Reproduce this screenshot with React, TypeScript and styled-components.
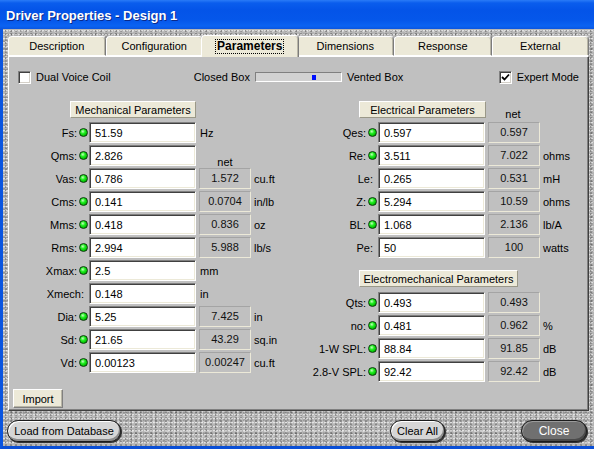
import React from "react";
import styled, { createGlobalStyle } from "styled-components";

const GlobalStyle = createGlobalStyle`
  html, body {
    margin: 0;
    padding: 0;
  }
  body {
    font-family: "Liberation Sans", Arial, sans-serif;
    font-size: 11px;
    color: #000;
  }
`;

const Window = styled.div`
  width: 594px;
  height: 449px;
  display: flex;
  flex-direction: column;
  overflow: hidden;
`;

const TitleBar = styled.div`
  height: 29px;
  flex: none;
  display: flex;
  align-items: center;
  padding: 2px 0 0 6px;
  box-sizing: border-box;
  background: linear-gradient(
    #2a7bf7 0,
    #0a5ded 3px,
    #0454e8 10px,
    #0557ea 20px,
    #0b63f2 26px,
    #0a55e0 29px
  );
  color: #fff;
  font-size: 13px;
  font-weight: bold;
  text-shadow: 1px 1px #0a2a8a;
`;

const Frame = styled.div`
  flex: 1;
  display: flex;
  flex-direction: column;
  min-height: 0;
  border-left: 3px solid #0a55e0;
  border-bottom: 3px solid #0a4fd6;
  background-color: #b5b5b5;
  background-image: radial-gradient(circle at 30% 40%, rgba(255, 255, 255, 0.6) 0.6px, transparent 1.2px),
    radial-gradient(circle at 60% 70%, rgba(0, 0, 0, 0.28) 0.6px, transparent 1.3px),
    radial-gradient(circle at 50% 50%, rgba(255, 255, 255, 0.4) 0.7px, transparent 1.4px),
    radial-gradient(circle at 20% 80%, rgba(0, 0, 0, 0.18) 0.8px, transparent 1.5px);
  background-size: 3px 4px, 5px 3px, 7px 5px, 4px 7px;
`;

const Body = styled.div`
  flex: 1;
  display: flex;
  flex-direction: column;
  min-height: 0;
  padding: 6px 5px 0 5px;
`;

const TabStrip = styled.div`
  height: 21px;
  flex: none;
  display: flex;
  align-items: flex-end;
`;

const Tab = styled.div<{ $active?: boolean }>`
  flex: 1;
  height: ${(p) => (p.$active ? 22 : 20)}px;
  margin: ${(p) => (p.$active ? "0 -2px -1px -2px" : "0")};
  position: relative;
  z-index: ${(p) => (p.$active ? 1 : 0)};
  box-sizing: border-box;
  display: flex;
  align-items: center;
  justify-content: center;
  background: #ece9d8;
  border: 1px solid #fff;
  border-right-color: #7c7c7c;
  border-bottom: ${(p) => (p.$active ? "none" : "1px solid #fff")};
  border-radius: 4px 4px 0 0;
  box-shadow: inset -1px 0 #b8b5a6;
  font-size: ${(p) => (p.$active ? 12 : 11)}px;
  font-weight: ${(p) => (p.$active ? "bold" : "normal")};
`;

const Focus = styled.span`
  border: 1px dotted #000;
  padding: 0 1px;
  line-height: 13px;
`;

const Panel = styled.div`
  flex: 1;
  min-height: 0;
  display: flex;
  flex-direction: column;
  background: #c0c0c0;
  border: 1px solid;
  border-color: #fff #404040 #404040 #fff;
  box-shadow: inset -1px -1px #808080;
`;

const TopRow = styled.div`
  display: grid;
  grid-template-columns: 1fr auto 1fr;
  align-items: center;
  height: 14px;
  margin: 13px 9px 0 9px;
`;

const CheckLabel = styled.div<{ $end?: boolean }>`
  display: flex;
  align-items: center;
  gap: 5px;
  justify-self: ${(p) => (p.$end ? "end" : "start")};
`;

const Box = styled.div`
  width: 13px;
  height: 13px;
  box-sizing: border-box;
  background: #fff;
  border: 1px solid;
  border-color: #808080 #fff #fff #808080;
  box-shadow: inset 1px 1px #404040, inset -1px -1px #d4d0c8;
  display: flex;
  align-items: center;
  justify-content: center;
`;

const Toggle = styled.div`
  display: flex;
  align-items: center;
  gap: 5px;
`;

const Track = styled.div`
  position: relative;
  width: 87px;
  height: 10px;
  box-sizing: border-box;
  background: #d2d2d2;
  border: 1px solid;
  border-color: #808080 #fff #fff #808080;
`;

const Thumb = styled.div`
  position: absolute;
  top: 2px;
  width: 4px;
  height: 5px;
  background: #0010ff;
`;

const Columns = styled.div`
  display: grid;
  grid-template-columns: 289px 1fr;
  margin-top: 17px;
  padding-left: 2px;
`;

const Column = styled.div`
  display: flex;
  flex-direction: column;
`;

const HeaderRow = styled.div`
  display: flex;
  align-items: flex-end;
  margin-bottom: 3px;
`;

const GroupHeader = styled.div<{ $w: number; $top?: number }>`
  width: ${(p) => p.$w}px;
  height: 17px;
  margin-left: 59px;
  margin-top: ${(p) => p.$top ?? 0}px;
  box-sizing: border-box;
  display: flex;
  align-items: center;
  justify-content: center;
  background: #ece9d8;
  border: 1px solid;
  border-color: #fff #9a9888 #9a9888 #fff;
`;

const NetHead = styled.div`
  width: 52px;
  margin-left: 1px;
  margin-bottom: -3px;
  text-align: center;
  line-height: 13px;
`;

const Row = styled.div`
  display: flex;
  align-items: center;
  height: 23px;
`;

const Lead = styled.div<{ $led: boolean }>`
  width: 77px;
  box-sizing: border-box;
  display: flex;
  align-items: center;
  justify-content: flex-end;
  padding-right: ${(p) => (p.$led ? 0 : 4)}px;
  white-space: nowrap;
`;

const Led = styled.span`
  width: 9px;
  height: 9px;
  margin-left: 2px;
  box-sizing: border-box;
  border-radius: 50%;
  border: 1px solid #0b3d0b;
  background: radial-gradient(circle at 40% 35%, #c8ffc0 0, #22ee22 35%, #00c000 70%, #007000 100%);
`;

const Field = styled.div`
  width: 107px;
  height: 21px;
  margin-left: 1px;
  box-sizing: border-box;
  padding-left: 5px;
  display: flex;
  align-items: center;
  background: #fff;
  border: 1px solid;
  border-color: #808080 #fff #fff #808080;
  box-shadow: inset 1px 1px #404040, inset -1px -1px #ece9d8;
  font-size: 11px;
`;

const NetBox = styled.div`
  width: 52px;
  height: 21px;
  margin-left: 3px;
  box-sizing: border-box;
  display: flex;
  align-items: center;
  justify-content: center;
  padding-bottom: 1px;
  color: #111;
  border: 1px solid;
  border-color: #a4a4a4 #ece9d8 #ece9d8 #a4a4a4;
`;

const NetLabel = styled.div`
  width: 52px;
  height: 23px;
  margin-left: 3px;
  display: flex;
  align-items: flex-end;
  justify-content: center;
  line-height: 13px;
  margin-bottom: -3px;
`;

const Unit = styled.span<{ $tight?: boolean }>`
  margin-left: ${(p) => (p.$tight ? 4 : 3)}px;
  white-space: nowrap;
`;

const Footer = styled.div`
  margin-top: auto;
  padding: 0 0 2px 4px;
`;

const FlatButton = styled.div`
  width: 50px;
  height: 19px;
  box-sizing: border-box;
  display: flex;
  align-items: center;
  justify-content: center;
  background: #ece9d8;
  border: 1px solid;
  border-color: #fff #808080 #808080 #fff;
  box-shadow: inset -1px -1px #b8b5a6;
`;

const BottomBar = styled.div`
  height: 35px;
  flex: none;
  display: flex;
  align-items: flex-start;
  padding: 9px 7px 0 4px;
  box-sizing: border-box;
`;

const Pill = styled.div<{ $dark?: boolean; $w: number; $push?: number }>`
  width: ${(p) => p.$w}px;
  height: 22px;
  margin-left: ${(p) => (p.$push === undefined ? "0" : p.$push < 0 ? "auto" : `${p.$push}px`)};
  box-sizing: border-box;
  display: flex;
  align-items: center;
  justify-content: center;
  border-radius: 11px;
  border: 1px solid #1c1c1c;
  background: ${(p) => (p.$dark ? "#707070" : "#d6d6d6")};
  color: ${(p) => (p.$dark ? "#fff" : "#000")};
  box-shadow: inset 1px 1px ${(p) => (p.$dark ? "#9a9a9a" : "#fff")},
    inset -1px -2px ${(p) => (p.$dark ? "#4a4a4a" : "#8c8c8c")}, 1px 1px 0 #333;
  font-size: ${(p) => (p.$dark ? 12 : 11)}px;
`;

type Param = {
  label: string;
  value: string;
  led?: boolean;
  net?: string;
  unit?: string;
  netHead?: boolean;
};

const mechanical: Param[] = [
  { label: "Fs:", value: "51.59", led: true, unit: "Hz" },
  { label: "Qms:", value: "2.826", led: true, netHead: true },
  { label: "Vas:", value: "0.786", led: true, net: "1.572", unit: "cu.ft" },
  { label: "Cms:", value: "0.141", led: true, net: "0.0704", unit: "in/lb" },
  { label: "Mms:", value: "0.418", led: true, net: "0.836", unit: "oz" },
  { label: "Rms:", value: "2.994", led: true, net: "5.988", unit: "lb/s" },
  { label: "Xmax:", value: "2.5", led: true, unit: "mm" },
  { label: "Xmech:", value: "0.148", unit: "in" },
  { label: "Dia:", value: "5.25", led: true, net: "7.425", unit: "in" },
  { label: "Sd:", value: "21.65", led: true, net: "43.29", unit: "sq.in" },
  { label: "Vd:", value: "0.00123", led: true, net: "0.00247", unit: "cu.ft" },
];

const electrical: Param[] = [
  { label: "Qes:", value: "0.597", led: true, net: "0.597" },
  { label: "Re:", value: "3.511", led: true, net: "7.022", unit: "ohms" },
  { label: "Le:", value: "0.265", net: "0.531", unit: "mH" },
  { label: "Z:", value: "5.294", led: true, net: "10.59", unit: "ohms" },
  { label: "BL:", value: "1.068", led: true, net: "2.136", unit: "lb/A" },
  { label: "Pe:", value: "50", net: "100", unit: "watts" },
];

const electromechanical: Param[] = [
  { label: "Qts:", value: "0.493", led: true, net: "0.493" },
  { label: "no:", value: "0.481", led: true, net: "0.962", unit: "%" },
  { label: "1-W SPL:", value: "88.84", led: true, net: "91.85", unit: "dB" },
  { label: "2.8-V SPL:", value: "92.42", led: true, net: "92.42", unit: "dB" },
];

const tabs = ["Description", "Configuration", "Parameters", "Dimensions", "Response", "External"];

const ParamRow = ({ p }: { p: Param }) => (
  <Row>
    <Lead $led={!!p.led}>
      {p.label}
      {p.led && <Led />}
    </Lead>
    <Field>{p.value}</Field>
    {p.net && <NetBox>{p.net}</NetBox>}
    {p.netHead && <NetLabel>net</NetLabel>}
    {p.unit && <Unit $tight={!p.net}>{p.unit}</Unit>}
  </Row>
);

const Check = ({ checked }: { checked?: boolean }) => (
  <Box>
    {checked && (
      <svg width="9" height="9" viewBox="0 0 9 9">
        <path d="M1 4 L3.5 6.5 L8 1.5" stroke="#000" strokeWidth="1.8" fill="none" />
      </svg>
    )}
  </Box>
);

const boxType = 0.68;

export default function App() {
  return (
    <>
      <GlobalStyle />
      <Window>
        <TitleBar>Driver Properties - Design 1</TitleBar>
        <Frame>
          <Body>
            <TabStrip>
              {tabs.map((t) => (
                <Tab key={t} $active={t === "Parameters"}>
                  {t === "Parameters" ? <Focus>{t}</Focus> : t}
                </Tab>
              ))}
            </TabStrip>
            <Panel>
              <TopRow>
                <CheckLabel>
                  <Check />
                  Dual Voice Coil
                </CheckLabel>
                <Toggle>
                  Closed Box
                  <Track>
                    <Thumb style={{ left: `${boxType * 83}px` }} />
                  </Track>
                  Vented Box
                </Toggle>
                <CheckLabel $end>
                  <Check checked />
                  Expert Mode
                </CheckLabel>
              </TopRow>
              <Columns>
                <Column>
                  <HeaderRow>
                    <GroupHeader $w={126}>Mechanical Parameters</GroupHeader>
                  </HeaderRow>
                  {mechanical.map((p) => (
                    <ParamRow key={p.label} p={p} />
                  ))}
                </Column>
                <Column>
                  <HeaderRow>
                    <GroupHeader $w={127}>Electrical Parameters</GroupHeader>
                    <NetHead>net</NetHead>
                  </HeaderRow>
                  {electrical.map((p) => (
                    <ParamRow key={p.label} p={p} />
                  ))}
                  <HeaderRow>
                    <GroupHeader $w={159} $top={11}>
                      Electromechanical Parameters
                    </GroupHeader>
                  </HeaderRow>
                  <div style={{ height: 1 }} />
                  {electromechanical.map((p) => (
                    <ParamRow key={p.label} p={p} />
                  ))}
                </Column>
              </Columns>
              <Footer>
                <FlatButton>Import</FlatButton>
              </Footer>
            </Panel>
          </Body>
          <BottomBar>
            <Pill $w={114}>Load from Database</Pill>
            <Pill $w={55} $push={-1}>
              Clear All
            </Pill>
            <Pill $w={66} $push={76} $dark>
              Close
            </Pill>
          </BottomBar>
        </Frame>
      </Window>
    </>
  );
}
